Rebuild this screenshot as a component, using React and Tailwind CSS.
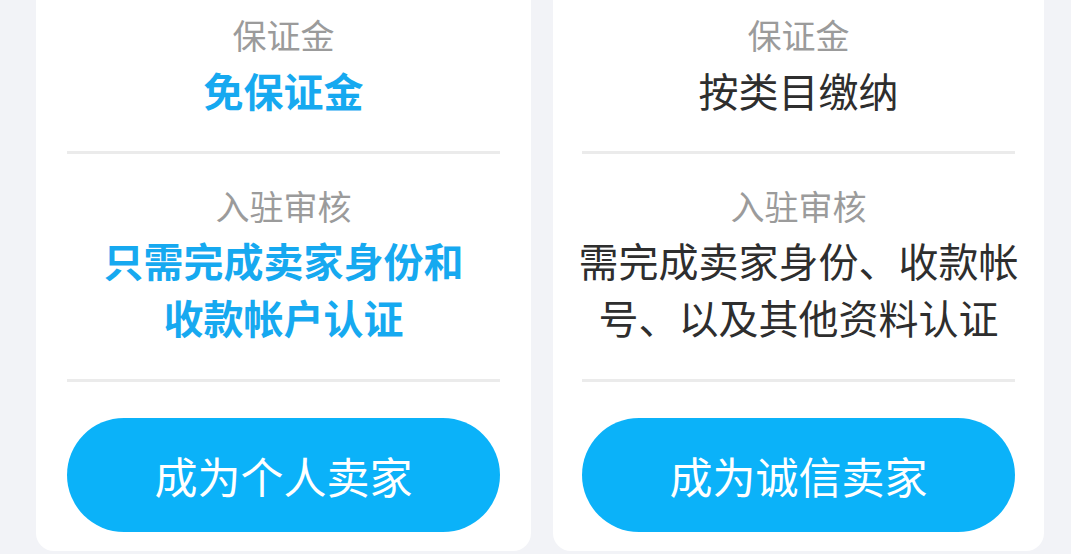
const FONT = "font-['Noto_Sans_CJK_SC','Noto_Sans',sans-serif]"

const plans = [
  {
    width: 'w-[495px]',
    pad: 'px-[31px]',
    deposit: '免保证金',
    review: ['只需完成卖家身份和', '收款帐户认证'],
    highlight: true,
    action: '成为个人卖家',
  },
  {
    width: 'w-[491px]',
    pad: 'px-[29px]',
    deposit: '按类目缴纳',
    review: ['需完成卖家身份、收款帐', '号、以及其他资料认证'],
    highlight: false,
    action: '成为诚信卖家',
  },
]

export default function App() {
  return (
    <div className={`${FONT} w-[1071px] h-[554px] overflow-hidden bg-[#f2f3f7] flex gap-[22px] pl-[36px]`}>
      {plans.map((p) => (
        <PlanCard key={p.action} plan={p} />
      ))}
    </div>
  )
}

function PlanCard({ plan }) {
  const valueCls = plan.highlight
    ? 'text-[#16a9f0] font-bold'
    : 'text-[#2e2e2e] font-normal'

  return (
    <div className={`${plan.width} ${plan.pad} h-[551px] bg-white rounded-b-[18px] flex flex-col pt-[13px]`}>
      {/* Deposit */}
      <div className="text-center text-[34px] leading-[44px] text-[#9b9b9b]">保证金</div>
      <div className={`mt-[5px] flex justify-center whitespace-nowrap text-[40px] leading-[56px] ${valueCls}`}>
        {plan.deposit}
      </div>

      <div className="mt-[33px] h-[3px] bg-[#ebebeb]" />

      {/* Review */}
      <div className="mt-[30px] text-center text-[34px] leading-[44px] text-[#9b9b9b]">入驻审核</div>
      <div className={`mt-[4px] flex flex-col text-[40px] leading-[57px] ${valueCls}`}>
        {plan.review.map((line) => (
          <div key={line} className="flex justify-center whitespace-nowrap">{line}</div>
        ))}
      </div>

      <div className="mt-[33px] h-[3px] bg-[#ebebeb]" />

      <button className="mt-[36px] h-[114px] w-full rounded-full bg-[#0bb2f9] text-white text-[43px] leading-none flex items-center justify-center">
        {plan.action}
      </button>
    </div>
  )
}
